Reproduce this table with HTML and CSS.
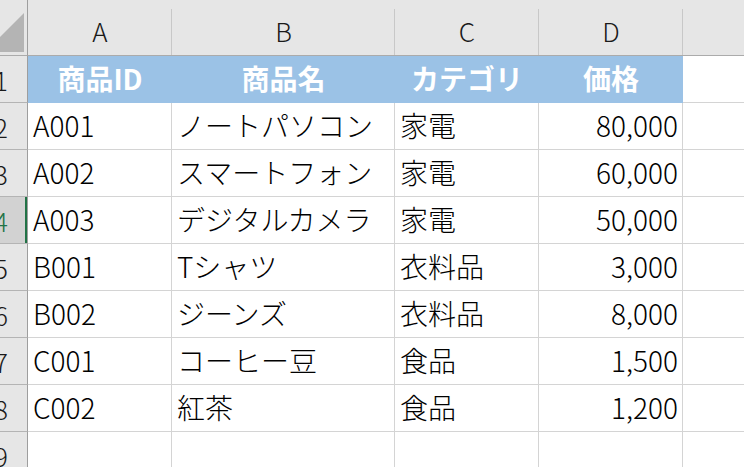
FILE: index.html
```html
<!DOCTYPE html>
<html lang="ja">
<head>
    <meta charset="UTF-8">
    <title>商品一覧</title>
    <link rel="stylesheet" href="styles.css">
</head>
<body>
    <div class="sheet">
        <div class="corner"><div class="corner-mark"></div></div>
        <div class="col-head">A</div>
        <div class="col-head">B</div>
        <div class="col-head">C</div>
        <div class="col-head">D</div>
        <div class="col-head"></div>

        <div class="row-head">1</div>
        <div class="cell title">商品ID</div>
        <div class="cell title">商品名</div>
        <div class="cell title">カテゴリ</div>
        <div class="cell title">価格</div>
        <div class="cell"></div>

        <div class="row-head">2</div>
        <div class="cell">A001</div>
        <div class="cell">ノートパソコン</div>
        <div class="cell">家電</div>
        <div class="cell num">80,000</div>
        <div class="cell"></div>

        <div class="row-head">3</div>
        <div class="cell">A002</div>
        <div class="cell">スマートフォン</div>
        <div class="cell">家電</div>
        <div class="cell num">60,000</div>
        <div class="cell"></div>

        <div class="row-head active">4</div>
        <div class="cell">A003</div>
        <div class="cell">デジタルカメラ</div>
        <div class="cell">家電</div>
        <div class="cell num">50,000</div>
        <div class="cell"></div>

        <div class="row-head">5</div>
        <div class="cell">B001</div>
        <div class="cell">Tシャツ</div>
        <div class="cell">衣料品</div>
        <div class="cell num">3,000</div>
        <div class="cell"></div>

        <div class="row-head">6</div>
        <div class="cell">B002</div>
        <div class="cell">ジーンズ</div>
        <div class="cell">衣料品</div>
        <div class="cell num">8,000</div>
        <div class="cell"></div>

        <div class="row-head">7</div>
        <div class="cell">C001</div>
        <div class="cell">コーヒー豆</div>
        <div class="cell">食品</div>
        <div class="cell num">1,500</div>
        <div class="cell"></div>

        <div class="row-head">8</div>
        <div class="cell">C002</div>
        <div class="cell">紅茶</div>
        <div class="cell">食品</div>
        <div class="cell num">1,200</div>
        <div class="cell"></div>

        <div class="row-head">9</div>
        <div class="cell"></div>
        <div class="cell"></div>
        <div class="cell"></div>
        <div class="cell"></div>
        <div class="cell"></div>
    </div>
</body>
</html>
```

FILE: styles.css
```css
* {
    box-sizing: border-box;
}

body {
    margin: 0;
    padding: 0;
    overflow: hidden;
    background: #fff;
    font-family: "Noto Sans CJK JP", "Noto Sans", sans-serif;
}

.sheet {
    display: grid;
    grid-template-columns: 53px 144px 223px 144px 144px 87px;
    grid-template-rows: 56px repeat(9, 47px);
    margin-left: -25px;
    width: 795px;
}

.corner {
    display: flex;
    align-items: flex-end;
    justify-content: flex-end;
    padding: 0 3px 3px 0;
    background: #e6e6e6;
    border-right: 1px solid #9e9e9e;
    border-bottom: 1px solid #ababab;
}

.corner-mark {
    width: 39px;
    height: 39px;
    background: #b4b4b4;
    clip-path: polygon(100% 0, 100% 100%, 0 100%);
}

.col-head {
    display: flex;
    align-items: center;
    justify-content: center;
    padding-top: 6px;
    font-size: 26px;
    font-weight: 300;
    color: #1a1a1a;
    background: linear-gradient(#c8c8c8, #c8c8c8) right 9px / 1px calc(100% - 9px) no-repeat, #e6e6e6;
    border-bottom: 1px solid #ababab;
}

.row-head {
    display: flex;
    align-items: center;
    justify-content: center;
    font-size: 26px;
    font-weight: 300;
    color: #1a1a1a;
    background: #e6e6e6;
    border-right: 1px solid #9e9e9e;
    border-bottom: 1px solid #b4b4b4;
}

.row-head.active {
    background: #d2d2d2;
    color: #217346;
    box-shadow: inset -2px 0 0 #217346;
}

.cell {
    display: flex;
    align-items: center;
    padding: 0 4px 2px 5px;
    font-size: 28px;
    font-weight: 300;
    color: #000;
    white-space: nowrap;
    border-right: 1px solid #d4d4d4;
    border-bottom: 1px solid #d4d4d4;
}

.cell.num {
    justify-content: flex-end;
}

.cell.title {
    justify-content: center;
    font-weight: bold;
    color: #fff;
    background: #9bc2e6;
    border-color: #9bc2e6;
}
```
